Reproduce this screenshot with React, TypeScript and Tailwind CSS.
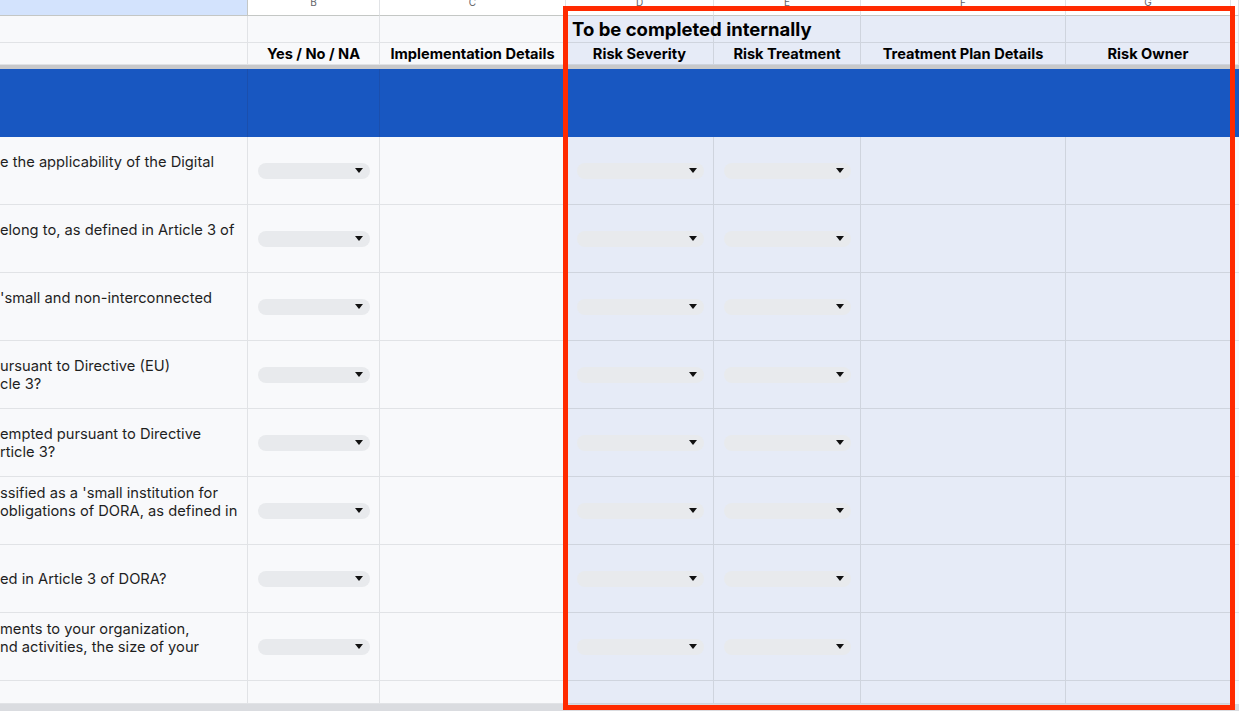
import React from "react";

const font = { fontFamily: "Inter, 'Noto Sans', Arial, sans-serif" };

const W = [
  "w-[248px]",
  "w-[132px]",
  "w-[186px]",
  "w-[148px]",
  "w-[147px]",
  "w-[205px]",
  "w-[165px]",
  "flex-1",
];

const LIGHT = "bg-[#f8f9fb] border-r border-b border-[#e1e3e6]";
const INT = "bg-[#e6ebf7] border-r border-b border-[#cfd4de]";

function Arrow() {
  return (
    <svg width="8" height="5" viewBox="0 0 8 5" className="shrink-0">
      <polygon points="0,0 8,0 4,5" fill="#111" />
    </svg>
  );
}

function Drop({ left = "pl-[10px]" }: { left?: string }) {
  return (
    <div className={`w-full h-full flex items-center ${left} pr-[9px]`}>
      <div className="w-full h-4 rounded-full bg-[#e8eaed] flex items-center justify-end pr-[7px]">
        <Arrow />
      </div>
    </div>
  );
}

const rows: string[][] = [
  ["e the applicability of the Digital", "\u00a0"],
  ["elong to, as defined in Article 3 of", "\u00a0"],
  ["'small and non-interconnected", "\u00a0"],
  ["ursuant to Directive (EU)", "cle 3?"],
  ["empted pursuant to Directive", "rticle 3?"],
  ["ssified as a 'small institution for", "obligations of DORA, as defined in", "\u00a0"],
  ["ed in Article 3 of DORA?"],
  ["ments to your organization,", "nd activities, the size of your", "\u00a0"],
];

export default function App() {
  const letters = ["", "B", "C", "D", "E", "F", "G", ""];
  const headers = ["", "Yes / No / NA", "Implementation Details", "Risk Severity", "Risk Treatment", "Treatment Plan Details", "Risk Owner", ""];
  return (
    <div className="relative w-[1239px] h-[711px] overflow-hidden bg-white text-[#1f1f1f]" style={font}>
      {/* column letter row */}
      <div className="flex h-[16px]">
        {letters.map((l, i) => (
          <div
            key={i}
            className={`${W[i]} h-full overflow-hidden flex justify-center border-b border-[#c4c7c5] ${
              i === 0 ? "bg-[#d3e3fd] border-r border-r-[#c4c7c5]" : "bg-white border-r border-r-[#e1e3e6]"
            }`}
          >
            <span className="text-[10px] leading-[10px] -mt-[3px] text-[#5f6368]">{l}</span>
          </div>
        ))}
      </div>

      {/* row 1 */}
      <div className="relative flex h-[27px]">
        {letters.map((_, i) => (
          <div key={i} className={`${W[i]} h-full ${i >= 3 && i <= 6 ? INT : LIGHT}`} />
        ))}
        <span className="absolute z-10 left-[572px] top-0 h-full flex items-center whitespace-nowrap text-[18.5px] font-bold text-black">
          To be completed internally
        </span>
      </div>

      {/* row 2 headers */}
      <div className="flex h-[22px]">
        {headers.map((h, i) => (
          <div
            key={i}
            className={`${W[i]} h-full flex items-center justify-center pt-[2px] whitespace-nowrap text-[14.6px] font-bold text-black ${
              i >= 3 && i <= 6 ? INT : LIGHT
            }`}
          >
            {h}
          </div>
        ))}
      </div>

      {/* frozen separator */}
      <div className="h-[4px] bg-[#c8c9cb]" />

      {/* blue row */}
      <div className="flex h-[68px] bg-[#1857c1]">
        {letters.map((_, i) => (
          <div key={i} className={`${W[i]} h-full ${i < 2 ? "border-r border-[#1a4fae]" : ""}`} />
        ))}
      </div>

      {/* data rows */}
      {rows.map((lines, r) => (
        <div key={r} className="flex h-[68px]">
          <div className={`${W[0]} h-full flex flex-col justify-center text-[14.7px] leading-[18px] whitespace-nowrap overflow-hidden ${LIGHT}`}>
            {lines.map((t, k) => (
              <div key={k}>{t}</div>
            ))}
          </div>
          <div className={`${W[1]} h-full ${LIGHT}`}>
            <Drop />
          </div>
          <div className={`${W[2]} h-full ${LIGHT}`} />
          <div className={`${W[3]} h-full ${INT}`}>
            <Drop left="pl-[11px]" />
          </div>
          <div className={`${W[4]} h-full ${INT}`}>
            <Drop />
          </div>
          <div className={`${W[5]} h-full ${INT}`} />
          <div className={`${W[6]} h-full ${INT}`} />
          <div className={`${W[7]} h-full bg-[#f8f9fb] border-b border-[#e1e3e6]`} />
        </div>
      ))}

      {/* partial row */}
      <div className="flex h-[23px]">
        {letters.map((_, i) => (
          <div key={i} className={`${W[i]} h-full ${i >= 3 && i <= 6 ? INT : i === 7 ? "bg-[#f8f9fb]" : LIGHT}`} />
        ))}
      </div>

      {/* horizontal scrollbar */}
      <div className="h-[7px] bg-[#dadce0]" />

      {/* annotation box */}
      <div className="absolute left-[563px] top-[6px] w-[672px] h-[704px] border-[5px] border-[#ff2a00] pointer-events-none" />
    </div>
  );
}
